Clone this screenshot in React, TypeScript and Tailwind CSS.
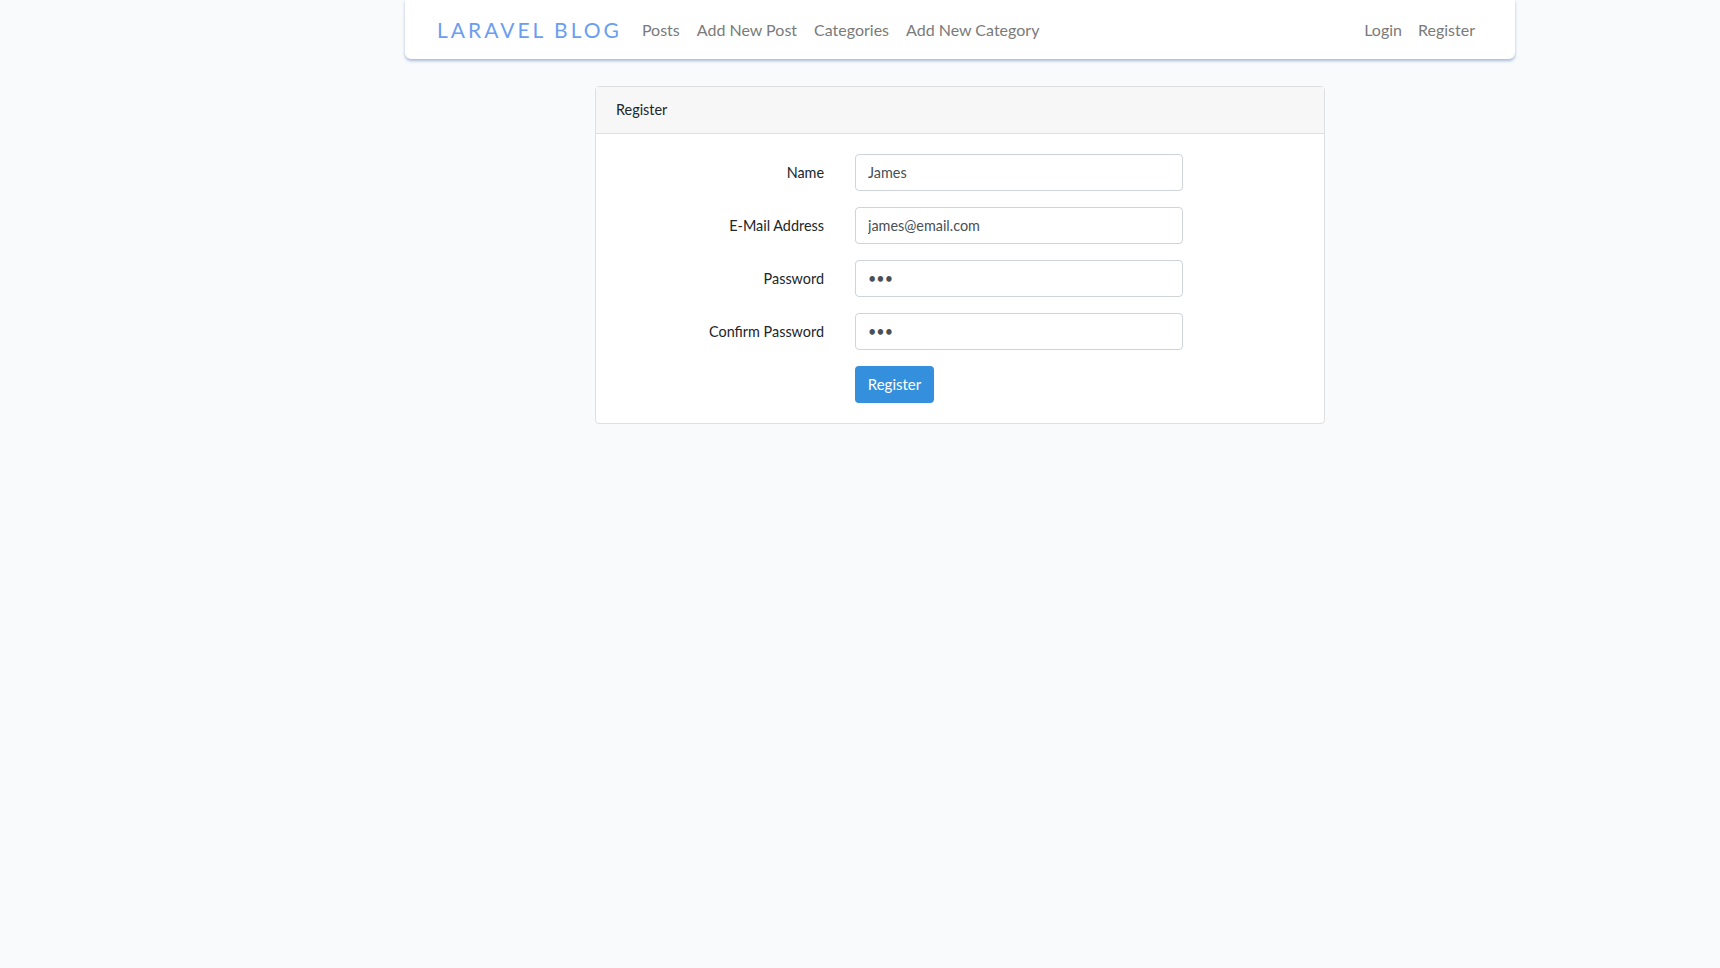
export default function App() {
  const fields = [
    { label: "Name", value: "James", type: "text" },
    { label: "E-Mail Address", value: "james@email.com", type: "email" },
    { label: "Password", value: "abc", type: "password" },
    { label: "Confirm Password", value: "abc", type: "password" },
  ];

  return (
    <div className="min-h-screen overflow-hidden bg-[#f8fafc] font-['Lato',sans-serif] text-[14.4px] text-[#212529]">
      <nav className="ml-[405px] flex h-[59px] w-[1110px] items-center rounded-b-[6px] bg-white pl-[32px] pr-[40px] shadow-[0_2px_3px_rgba(140,165,205,0.75)]">
        <a className="mr-[20px] pt-[1px] text-[21px] tracking-[3px] text-[#6a9ef0]">LARAVEL BLOG</a>
        <ul className="flex gap-[17px] text-[16px] text-[#7a7a7a]">
          <li>Posts</li>
          <li>Add New Post</li>
          <li>Categories</li>
          <li>Add New Category</li>
        </ul>
        <ul className="ml-auto flex gap-[16px] text-[16px] text-[#7a7a7a]">
          <li>Login</li>
          <li>Register</li>
        </ul>
      </nav>

      <div className="ml-[595px] mt-[27px] w-[730px] rounded-[4px] border border-[#dfdfdf] bg-white">
        <div className="h-[47px] border-b border-[#dfdfdf] bg-[#f7f7f7] px-[20px] leading-[46px]">Register</div>
        <form className="flex flex-col gap-[16px] p-[20px]">
          {fields.map((f) => (
            <div key={f.label} className="flex items-center">
              <label className="w-[208px] text-right">{f.label}</label>
              <input
                type={f.type}
                defaultValue={f.value}
                className="ml-[31px] h-[37px] w-[328px] rounded-[4px] border border-[#ced4da] px-[12px] text-[14.4px] text-[#495057] outline-none"
              />
            </div>
          ))}
          <div className="flex">
            <button type="button" className="ml-[239px] h-[37px] w-[79px] rounded-[4px] bg-[#3490dc] text-[15px] text-white">
              Register
            </button>
          </div>
        </form>
      </div>
    </div>
  );
}
